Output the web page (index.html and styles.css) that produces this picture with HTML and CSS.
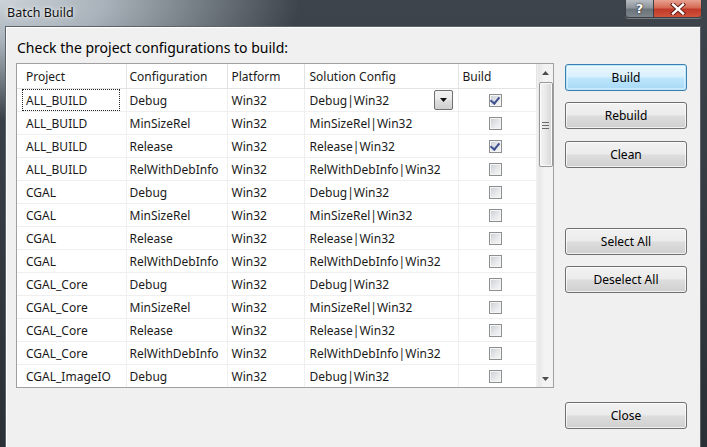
FILE: index.html
```html
<!DOCTYPE html>
<html>
<head>
<meta charset="utf-8">
<link rel="stylesheet" href="styles.css">
</head>
<body>
<div class="window">
  <div class="titlebar">
    <span class="title">Batch Build</span>
    <div class="caption">
      <div class="cap-btn help">?</div>
      <div class="cap-btn close">
        <svg width="16" height="12" viewBox="0 0 16 12">
          <path d="M3 1.5 L13 10.5 M13 1.5 L3 10.5" stroke="#5a1810" stroke-width="4.2" stroke-linecap="square"/>
          <path d="M3 1.5 L13 10.5 M13 1.5 L3 10.5" stroke="#ffffff" stroke-width="2.4" stroke-linecap="square"/>
        </svg>
      </div>
    </div>
  </div>
  <div class="client">
    <div class="main">
      <div class="label">Check the project configurations to build:</div>
      <div class="grid">
        <table class="list">
          <colgroup>
            <col class="c1"><col class="c2"><col class="c3"><col class="c4"><col class="c5">
          </colgroup>
          <thead>
            <tr><th class="first">Project</th><th>Configuration</th><th>Platform</th><th class="sol">Solution Config</th><th class="bld">Build</th></tr>
          </thead>
          <tbody>
            <tr><td class="first focus"><div class="focusrect">ALL_BUILD</div></td><td>Debug</td><td>Win32</td><td class="sol"><div class="solcell"><span>Debug|Win32</span><span class="dropbtn"><svg width="7" height="4" viewBox="0 0 7 4"><path d="M0 0 H7 L3.5 4 Z" fill="#111"/></svg></span></div></td><td class="bld"><span class="chk on"></span></td></tr>
            <tr><td class="first">ALL_BUILD</td><td>MinSizeRel</td><td>Win32</td><td class="sol">MinSizeRel|Win32</td><td class="bld"><span class="chk"></span></td></tr>
            <tr><td class="first">ALL_BUILD</td><td>Release</td><td>Win32</td><td class="sol">Release|Win32</td><td class="bld"><span class="chk on"></span></td></tr>
            <tr><td class="first">ALL_BUILD</td><td>RelWithDebInfo</td><td>Win32</td><td class="sol">RelWithDebInfo|Win32</td><td class="bld"><span class="chk"></span></td></tr>
            <tr><td class="first">CGAL</td><td>Debug</td><td>Win32</td><td class="sol">Debug|Win32</td><td class="bld"><span class="chk"></span></td></tr>
            <tr><td class="first">CGAL</td><td>MinSizeRel</td><td>Win32</td><td class="sol">MinSizeRel|Win32</td><td class="bld"><span class="chk"></span></td></tr>
            <tr><td class="first">CGAL</td><td>Release</td><td>Win32</td><td class="sol">Release|Win32</td><td class="bld"><span class="chk"></span></td></tr>
            <tr><td class="first">CGAL</td><td>RelWithDebInfo</td><td>Win32</td><td class="sol">RelWithDebInfo|Win32</td><td class="bld"><span class="chk"></span></td></tr>
            <tr><td class="first">CGAL_Core</td><td>Debug</td><td>Win32</td><td class="sol">Debug|Win32</td><td class="bld"><span class="chk"></span></td></tr>
            <tr><td class="first">CGAL_Core</td><td>MinSizeRel</td><td>Win32</td><td class="sol">MinSizeRel|Win32</td><td class="bld"><span class="chk"></span></td></tr>
            <tr><td class="first">CGAL_Core</td><td>Release</td><td>Win32</td><td class="sol">Release|Win32</td><td class="bld"><span class="chk"></span></td></tr>
            <tr><td class="first">CGAL_Core</td><td>RelWithDebInfo</td><td>Win32</td><td class="sol">RelWithDebInfo|Win32</td><td class="bld"><span class="chk"></span></td></tr>
            <tr><td class="first">CGAL_ImageIO</td><td>Debug</td><td>Win32</td><td class="sol">Debug|Win32</td><td class="bld"><span class="chk"></span></td></tr>
          </tbody>
        </table>
        <div class="vscroll">
          <div class="sbtn"><svg width="7" height="4" viewBox="0 0 7 4"><path d="M0 4 H7 L3.5 0 Z" fill="#4d4d4d"/></svg></div>
          <div class="track">
            <div class="thumb"><span class="grip"></span></div>
          </div>
          <div class="sbtn"><svg width="7" height="4" viewBox="0 0 7 4"><path d="M0 0 H7 L3.5 4 Z" fill="#4d4d4d"/></svg></div>
        </div>
      </div>
    </div>
    <div class="buttons">
      <div class="btn default">Build</div>
      <div class="btn g11">Rebuild</div>
      <div class="btn g12">Clean</div>
      <div class="btn g60">Select All</div>
      <div class="btn g11">Deselect All</div>
      <div class="btn g109">Close</div>
    </div>
  </div>
</div>
</body>
</html>
```

FILE: styles.css
```css
* { box-sizing: border-box; }
html, body { margin: 0; padding: 0; }
body {
  width: 707px;
  height: 447px;
  overflow: hidden;
  font-family: "Noto Sans", "Open Sans", sans-serif;
  font-size: 12px;
  color: #000;
}
.window {
  width: 707px;
  height: 447px;
  display: flex;
  flex-direction: column;
  background:
    radial-gradient(ellipse 300px 120px at 0 0, #ccd3d9 0%, #a9b2ba 35%, rgba(70,78,86,0.0) 100%),
    linear-gradient(180deg, #3d444b 0%, #2b3036 100%);
}
.titlebar {
  height: 26px;
  flex: none;
  display: flex;
  justify-content: space-between;
  align-items: flex-start;
}
.title {
  margin: 4px 0 0 7px;
  font-size: 12.5px;
  color: #111;
  text-shadow: 0 0 6px rgba(255,255,255,0.8), 0 0 3px rgba(255,255,255,0.8);
}
.caption {
  display: flex;
  margin-right: 5px;
  height: 18px;
  border: 1px solid #3a3f45;
  border-top: none;
  border-radius: 0 0 4px 4px;
  overflow: hidden;
  box-shadow: 0 1px 0 rgba(255,255,255,0.3);
}
.cap-btn {
  height: 17px;
  display: flex;
  align-items: center;
  justify-content: center;
}
.help {
  width: 28px;
  background: linear-gradient(180deg, #b6bcc2 0%, #8e959c 45%, #6b737b 55%, #7d858c 100%);
  color: #fff;
  font-weight: bold;
  font-size: 13px;
  font-family: "DejaVu Sans", sans-serif;
  text-shadow: 0 0 2px #222, 0 0 1px #222;
  border-right: 1px solid #3a3f45;
}
.close {
  width: 47px;
  background: linear-gradient(180deg, #e8a190 0%, #d56b55 45%, #c1392a 55%, #d0543c 100%);
}
.client {
  flex: 1;
  margin: 0 6px 0 5px;
  background: #f0f0f0;
  border: 1px solid #5c646b;
  border-bottom: none;
  box-shadow: inset 1px 1px 0 #ffffff;
  display: flex;
  padding: 0 13px 0 10px;
}
.main {
  width: 538px;
  display: flex;
  flex-direction: column;
}
.label {
  margin-top: 13px;
  height: 16px;
  line-height: 16px;
  padding-left: 1px;
  font-size: 14px;
  color: #000;
}
.grid {
  margin-top: 7px;
  width: 538px;
  height: 325px;
  border: 1px solid #a0a0a0;
  background: #fff;
  display: flex;
  overflow: hidden;
}
.list {
  width: 519px;
  table-layout: fixed;
  border-collapse: collapse;
  flex: none;
  align-self: flex-start;
}
col.c1 { width: 109px; }
col.c2 { width: 101px; }
col.c3 { width: 77px; }
col.c4 { width: 154px; }
col.c5 { width: 78px; }
.list th, .list td {
  text-align: left;
  font-weight: normal;
  white-space: nowrap;
  overflow: hidden;
  padding: 2px 0 0 3px;
  color: #1a1a1a;
}
.list th {
  height: 24px;
  border-right: 1px solid #e3e3e3;
  border-bottom: 1px solid #e3e3e3;
}
.list td {
  height: 23px;
  border-right: 1px solid #efefef;
  border-bottom: 1px solid #efefef;
}
.list tr > :nth-child(3) { padding-left: 4px; }
.list .first { padding-left: 9px; }
.list .sol { padding-left: 5px; }
.list .bld { padding-left: 4px; }
.list td.bld { text-align: center; padding: 0; }
.list td.focus { padding: 0 6px 0 5px; }
.list td.sol:has(.solcell) { padding-top: 0; }
.focusrect {
  height: 22px;
  border: 1px dotted #222;
  padding: 1px 0 0 3px;
  line-height: 20px;
}
.solcell {
  display: flex;
  align-items: center;
  justify-content: space-between;
  padding-right: 5px;
}
.solcell span:first-child { padding-top: 2px; }
.dropbtn {
  width: 19px;
  height: 20px;
  border: 1px solid #707070;
  border-radius: 2px;
  background: linear-gradient(180deg, #f2f2f2 0%, #ebebeb 45%, #dddddd 55%, #cfcfcf 100%);
  display: flex;
  align-items: center;
  justify-content: center;
}
.chk {
  display: inline-block;
  vertical-align: middle;
  width: 13px;
  height: 13px;
  border: 1px solid #8e8f8f;
  background: linear-gradient(135deg, #c8ccd2 0%, #e4e6e9 50%, #f7f7f7 100%);
  box-shadow: inset 0 0 0 1px #f4f4f4;
  margin-left: -4px;
  position: relative;
}
.chk.on::after {
  content: "";
  position: absolute;
  left: 2px;
  top: 0px;
  width: 4px;
  height: 7px;
  border-right: 2px solid #3e5190;
  border-bottom: 2px solid #3e5190;
  transform: rotate(40deg);
}
.vscroll {
  width: 17px;
  flex: none;
  display: flex;
  flex-direction: column;
  background: linear-gradient(90deg, #e6e6e6 0%, #f3f3f3 40%, #f3f3f3 100%);
  border-left: 1px solid #f0f0f0;
}
.sbtn {
  height: 17px;
  flex: none;
  display: flex;
  align-items: center;
  justify-content: center;
}
.track {
  flex: 1;
  padding: 1px 1px 0 1px;
}
.thumb {
  height: 85px;
  border: 1px solid #979797;
  border-radius: 2px;
  background: linear-gradient(90deg, #f4f4f4 0%, #e8e8e8 50%, #d6d6d6 100%);
  box-shadow: inset 0 0 0 1px #fbfbfb;
  display: flex;
  align-items: center;
  justify-content: center;
}
.grip {
  width: 7px;
  height: 7px;
  background: repeating-linear-gradient(180deg, #6a6a6a 0 1px, transparent 1px 3px);
  margin-top: 2px;
}
.buttons {
  margin-left: 11px;
  width: 122px;
  display: flex;
  flex-direction: column;
  padding-top: 37px;
}
.btn {
  height: 27px;
  flex: none;
  border: 1px solid #707070;
  border-radius: 3px;
  background: linear-gradient(180deg, #f2f2f2 0%, #ebebeb 48%, #dddddd 52%, #cfcfcf 100%);
  box-shadow: inset 0 0 0 1px rgba(255,255,255,0.7);
  display: flex;
  align-items: center;
  justify-content: center;
  color: #000;
  padding-bottom: 1px;
}
.btn.default {
  border-color: #3c7fb1;
  background: linear-gradient(180deg, #eaf6fd 0%, #d9f0fc 48%, #bee6fd 52%, #a7d9f5 100%);
  box-shadow: inset 0 0 0 1px #b8e7fb, inset 0 0 0 2px rgba(255,255,255,0.4);
}
.g11 { margin-top: 11px; }
.g12 { margin-top: 12px; }
.g60 { margin-top: 60px; }
.g109 { margin-top: 109px; }
```
